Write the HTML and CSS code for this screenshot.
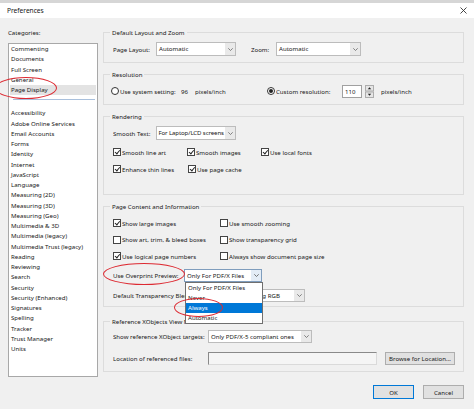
FILE: index.html
```html
<!DOCTYPE html>
<html lang="en">
<head>
<meta charset="utf-8">
<title>Preferences</title>
<link rel="stylesheet" href="styles.css">
</head>
<body>
<div class="os-strip"></div>
<header class="titlebar">
  <span class="title">Preferences</span>
  <svg class="close" width="7" height="7" viewBox="0 0 7 7"><path d="M0.5 0.5 L6.5 6.5 M6.5 0.5 L0.5 6.5" stroke="#333" stroke-width="0.9" fill="none"/></svg>
</header>

<main class="dialog">
  <div class="columns">
    <aside class="categories">
      <div class="cat-label">Categories:</div>
      <ul class="cat-list">
        <li>Commenting</li>
        <li>Documents</li>
        <li>Full Screen</li>
        <li>General</li>
        <li class="selected">Page Display</li>
        <li class="sep"></li>
        <li>Accessibility</li>
        <li>Adobe Online Services</li>
        <li>Email Accounts</li>
        <li>Forms</li>
        <li>Identity</li>
        <li>Internet</li>
        <li>JavaScript</li>
        <li>Language</li>
        <li>Measuring (2D)</li>
        <li>Measuring (3D)</li>
        <li>Measuring (Geo)</li>
        <li>Multimedia &amp; 3D</li>
        <li>Multimedia (legacy)</li>
        <li>Multimedia Trust (legacy)</li>
        <li>Reading</li>
        <li>Reviewing</li>
        <li>Search</li>
        <li>Security</li>
        <li>Security (Enhanced)</li>
        <li>Signatures</li>
        <li>Spelling</li>
        <li>Tracker</li>
        <li>Trust Manager</li>
        <li>Units</li>
      </ul>
    </aside>

    <section class="panel">
      <div class="group g-layout">
        <div class="group-title">Default Layout and Zoom</div>
        <div class="row top9">
          <span class="lbl w43">Page Layout:</span>
          <div class="select w80"><span class="val">Automatic</span><span class="arrow"><svg width="5" height="3" viewBox="0 0 5 3"><path d="M0.3 0.3 L2.5 2.5 L4.7 0.3" stroke="#666" stroke-width="0.8" fill="none"/></svg></span></div>
          <span class="lbl zoom-lbl">Zoom:</span>
          <div class="select w85"><span class="val">Automatic</span><span class="arrow"><svg width="5" height="3" viewBox="0 0 5 3"><path d="M0.3 0.3 L2.5 2.5 L4.7 0.3" stroke="#666" stroke-width="0.8" fill="none"/></svg></span></div>
        </div>
      </div>

      <div class="group g-res">
        <div class="group-title">Resolution</div>
        <div class="row top9">
          <span class="radio"></span>
          <span class="lbl res-a">Use system setting:</span>
          <span class="lbl res-b">96</span>
          <span class="lbl res-c">pixels/inch</span>
          <span class="radio on"></span>
          <span class="lbl res-d">Custom resolution:</span>
          <span class="edit">110</span>
          <svg class="spin" width="9" height="13" viewBox="0 0 9 13">
            <rect x="0.5" y="0.5" width="8" height="5.5" fill="#e6e6e6" stroke="#adadad"/>
            <rect x="0.5" y="7" width="8" height="5.5" fill="#e6e6e6" stroke="#adadad"/>
            <path d="M2.8 4.2 L4.5 2.2 L6.2 4.2 Z" fill="#222"/>
            <path d="M2.8 8.8 L4.5 10.8 L6.2 8.8 Z" fill="#222"/>
          </svg>
          <span class="lbl res-e">pixels/inch</span>
        </div>
      </div>

      <div class="group g-render">
        <div class="group-title">Rendering</div>
        <div class="row top9">
          <span class="lbl w43">Smooth Text:</span>
          <div class="select w80 tight"><span class="val">For Laptop/LCD screens</span><span class="arrow"><svg width="5" height="3" viewBox="0 0 5 3"><path d="M0.3 0.3 L2.5 2.5 L4.7 0.3" stroke="#666" stroke-width="0.8" fill="none"/></svg></span></div>
        </div>
        <div class="checks r-next">
          <label class="chk c74"><span class="box on"></span>Smooth line art</label>
          <label class="chk c74"><span class="box on"></span>Smooth images</label>
          <label class="chk"><span class="box on"></span>Use local fonts</label>
        </div>
        <div class="checks r-next">
          <label class="chk c75"><span class="box on"></span>Enhance thin lines</label>
          <label class="chk"><span class="box on"></span>Use page cache</label>
        </div>
      </div>

      <div class="group g-content">
        <div class="group-title">Page Content and Information</div>
        <div class="checks top11">
          <label class="chk c107"><span class="box on"></span>Show large images</label>
          <label class="chk"><span class="box"></span>Use smooth zooming</label>
        </div>
        <div class="checks r-pc">
          <label class="chk c107"><span class="box"></span>Show art, trim, &amp; bleed boxes</label>
          <label class="chk"><span class="box"></span>Show transparency grid</label>
        </div>
        <div class="checks r-pc">
          <label class="chk c107"><span class="box on"></span>Use logical page numbers</label>
          <label class="chk"><span class="box"></span>Always show document page size</label>
        </div>
        <div class="row r13 r-over">
          <span class="lbl w71">Use Overprint Preview:</span>
          <div class="select open w78"><span class="val">Only For PDF/X Files</span><span class="arrow"><svg width="5" height="3" viewBox="0 0 5 3"><path d="M0.3 0.3 L2.5 2.5 L4.7 0.3" stroke="#555" stroke-width="0.8" fill="none"/></svg></span></div>
        </div>
        <div class="row r13 r-blend">
          <span class="lbl w126">Default Transparency Blending Color Space:</span>
          <div class="select w66"><span class="val">Working RGB</span><span class="arrow"><svg width="5" height="3" viewBox="0 0 5 3"><path d="M0.3 0.3 L2.5 2.5 L4.7 0.3" stroke="#666" stroke-width="0.8" fill="none"/></svg></span></div>
        </div>
        <ul class="dropdown">
          <li>Only For PDF/X Files</li>
          <li>Never</li>
          <li class="hl">Always</li>
          <li>Automatic</li>
        </ul>
      </div>

      <div class="group g-xobj">
        <div class="group-title">Reference XObjects View Mode</div>
        <div class="row r13 top8">
          <span class="lbl w95">Show reference XObject targets:</span>
          <div class="select w104"><span class="val">Only PDF/X-5 compliant ones</span><span class="arrow"><svg width="5" height="3" viewBox="0 0 5 3"><path d="M0.3 0.3 L2.5 2.5 L4.7 0.3" stroke="#666" stroke-width="0.8" fill="none"/></svg></span></div>
        </div>
        <div class="row r13 r-x2">
          <span class="lbl w95">Location of referenced files:</span>
          <span class="path-field"></span>
          <button class="btn browse">Browse for Location...</button>
        </div>
      </div>
    </section>
  </div>

  <footer class="buttons">
    <button class="btn ok">OK</button>
    <button class="btn">Cancel</button>
  </footer>

  <!-- red hand-drawn highlight rings -->
  <span class="ring ring-cat"></span>
  <span class="ring ring-over"></span>
  <span class="ring ring-always"></span>
</main>
</body>
</html>
```

FILE: styles.css
```css
* { box-sizing: border-box; }

html, body {
  margin: 0;
  padding: 0;
}

body {
  width: 474px;
  height: 409px;
  overflow: hidden;
  background: #f0f0f0;
  font-family: "Noto Sans", "Open Sans", sans-serif;
  font-size: 6.1px;
  color: #161616;
}

.os-strip {
  height: 3px;
  background: #d6d6d6;
}

.titlebar {
  height: 15px;
  background: #fff;
  display: flex;
  align-items: center;
  justify-content: space-between;
  padding: 0 7px 0 7px;
}

.title {
  font-size: 6.6px;
  line-height: 10px;
}

.close { display: block; }

.dialog {
  position: relative;
  height: 391px;
}

.columns {
  display: flex;
  align-items: flex-start;
}

/* ---- category list ---- */
.categories {
  width: 90px;
  margin-left: 8px;
  margin-top: 10px;
}

.cat-label {
  line-height: 10px;
  height: 10px;
}

.cat-list {
  list-style: none;
  margin: 5px 0 0 0;
  padding: 0;
  height: 334px;
  background: #fff;
  border: 1px solid #a8a8a8;
}

.cat-list li {
  height: 10.26px;
  line-height: 10.26px;
  padding-left: 2px;
  white-space: nowrap;
}

.cat-list li.selected {
  background: #e3e3e3;
  margin: 0 1px;
  padding-left: 1px;
}

.cat-list li.sep {
  height: 9.6px;
}

.cat-list li.sep::after {
  content: "";
  display: block;
  margin: 3.5px 2px 0 2px;
  height: 1px;
  background: #a9c0dc;
}

/* ---- option groups ---- */
.panel {
  width: 361px;
  margin-left: 5px;
  margin-top: 14px;
}

.group {
  position: relative;
  border: 1px solid #dcdcdc;
  padding-left: 9px;
}

/* caption sits on the top border and takes no room of its own */
.group-title {
  display: table;
  margin: -5.5px 0 -4.5px -3px;
  padding: 0 2px;
  height: 10px;
  line-height: 10px;
  background: #f0f0f0;
  white-space: nowrap;
}

.g-layout { height: 31px; }
.g-res { height: 31px; margin-top: 11px; padding-left: 7px; }
.g-res .group-title { margin-left: -1px; }
.g-render { height: 79px; margin-top: 11px; }
.g-content { height: 101px; margin-top: 11px; }
.g-xobj { height: 51px; margin-top: 14px; }

.top8 { margin-top: 8px; }
.top9 { margin-top: 9px; }
.top11 { margin-top: 11px; }

.row {
  display: flex;
  align-items: center;
  height: 14px;
  white-space: nowrap;
}

.row.r13 { height: 13px; }

.lbl {
  flex: none;
  overflow: hidden;
  white-space: nowrap;
}

.w43 { width: 43px; }
.w71 { width: 71px; }
.w95 { width: 95px; }
.w126 { width: 126px; }

.zoom-lbl { width: 25px; margin-left: 15px; }

/* combo boxes */
.select {
  flex: none;
  display: flex;
  height: 100%;
  background: #fff;
  border: 1px solid #bcbcbc;
}

.w66 { width: 66px; }
.w78 { width: 78px; }
.w80 { width: 80px; }
.w85 { width: 85px; }
.w104 { width: 104px; }

.select .val {
  flex: 1;
  padding-left: 2px;
  line-height: 11px;
  overflow: hidden;
  white-space: nowrap;
}

.select.tight .val {
  letter-spacing: -0.12px;
  padding-left: 1.5px;
}

.select .arrow {
  flex: none;
  width: 10px;
  background: #e9e9e9;
  display: flex;
  align-items: center;
  justify-content: center;
}

.select.open {
  border-color: #7f9dbd;
}

.select.open .arrow {
  background: #e3ecf6;
}

/* radio buttons */
.radio {
  flex: none;
  width: 8px;
  height: 8px;
  border: 1px solid #333;
  border-radius: 50%;
  background: #fff;
  display: flex;
  align-items: center;
  justify-content: center;
}

.radio.on::after {
  content: "";
  width: 4px;
  height: 4px;
  border-radius: 50%;
  background: #222;
}

.res-a { width: 61px; margin-left: 1px; }
.res-b { width: 14px; }
.res-c { width: 72px; }
.res-d { width: 66px; margin-left: 1px; }
.res-e { margin-left: 7px; }

.edit {
  flex: none;
  width: 20px;
  height: 13px;
  background: #fff;
  border: 1px solid #a0a0a0;
  padding-left: 2px;
  line-height: 11px;
}

.spin {
  flex: none;
  display: block;
  margin-left: 3px;
}

/* check boxes */
.checks {
  display: flex;
  align-items: center;
  height: 10px;
  white-space: nowrap;
}

.r-next { margin-top: 7px; }
.r-pc { margin-top: 6.5px; }

.chk {
  flex: none;
  display: flex;
  align-items: center;
}

.c74 { width: 74px; }
.c75 { width: 75px; }
.c107 { width: 107px; }

.box {
  flex: none;
  width: 8px;
  height: 8px;
  margin-right: 1px;
  border: 1px solid #444;
  background: #fff;
  position: relative;
}

.box.on::after {
  content: "";
  position: absolute;
  left: 2px;
  top: 0.4px;
  width: 1.8px;
  height: 3.8px;
  border-right: 0.9px solid #222;
  border-bottom: 0.9px solid #222;
  transform: rotate(40deg);
}

.r-over { margin-top: 8px; }
.r-blend { margin-top: 7px; }

/* opened combo list */
.dropdown {
  position: absolute;
  z-index: 5;
  left: 81px;
  top: 75px;
  width: 78px;
  height: 42px;
  margin: 0;
  padding: 0;
  list-style: none;
  background: #fff;
  border: 1px solid #6f6f6f;
}

.dropdown li {
  height: 10px;
  line-height: 10px;
  padding-left: 2px;
  white-space: nowrap;
}

.dropdown li.hl {
  background: #0078d7;
  color: #fff;
}

.r-x2 { margin-top: 9px; }

.path-field {
  flex: none;
  width: 169px;
  height: 13px;
  background: #f5f5f5;
  border-top: 1px solid #8a8a8a;
  border-left: 1px solid #8a8a8a;
  border-right: 1px solid #dadada;
  border-bottom: 1px solid #dadada;
}

/* push buttons */
.btn {
  flex: none;
  margin: 0;
  padding: 0;
  height: 13px;
  font: inherit;
  color: #161616;
  background: #e1e1e1;
  border: 1px solid #adadad;
  line-height: 11px;
}

.browse {
  width: 70px;
  margin-left: 8px;
}

.buttons {
  display: flex;
  justify-content: flex-end;
  gap: 9px;
  padding-right: 10px;
  margin-top: 8px;
}

.buttons .btn {
  width: 41px;
  height: 14px;
}

.btn.ok {
  border-color: #0078d7;
}

/* annotation rings */
.ring {
  position: absolute;
  border: 1.4px solid #dd2a32;
  border-radius: 50%;
  pointer-events: none;
  z-index: 8;
}

.ring-cat { left: -5px; top: 59px; width: 62px; height: 22px; }
.ring-over { left: 103px; top: 245px; width: 82px; height: 22px; }
.ring-always { left: 174px; top: 280px; width: 49px; height: 19px; }
```
